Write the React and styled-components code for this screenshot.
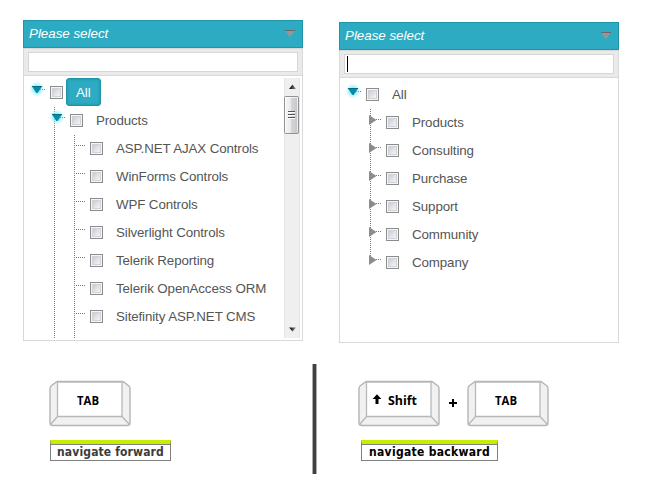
import React from "react";
import styled, { createGlobalStyle, css } from "styled-components";

const GlobalStyle = createGlobalStyle`
  * { box-sizing: border-box; }
  body {
    margin: 0;
    background: #fff;
    font-family: "Liberation Sans", Arial, sans-serif;
  }
`;

const Page = styled.main`
  width: 651px;
  height: 498px;
  overflow: hidden;
  background: #fff;
`;

const Panels = styled.section`
  display: flex;
  align-items: flex-start;
  gap: 36px;
  height: 364px;
  padding: 20px 0 0 23px;
`;

const Panel = styled.div`
  width: 280px;
  margin-top: ${(p) => p.$drop || 0}px;
`;

const Header = styled.div`
  display: flex;
  align-items: center;
  justify-content: space-between;
  height: 28px;
  padding: 0 6px 0 5px;
  border: 1px solid #1f94ab;
  background: #2dabc2;
  color: #fff;
  font-size: 13.33px;
  font-style: italic;
  line-height: 26px;
`;

const HeaderArrow = styled.svg`
  display: block;
  width: 12px;
  height: 8px;
  margin-bottom: 2px;
`;

const Filter = styled.div`
  height: 28px;
  padding: 3px 4px 2px;
  border: 1px solid #d9d9d9;
  background: #eaeaea;
`;

const FilterField = styled.div`
  display: flex;
  align-items: center;
  height: 20px;
  padding-left: 2px;
  border: 1px solid #d6d6d6;
  background: #fff;
`;

const Caret = styled.span`
  width: 1px;
  height: 16px;
  background: #000;
`;

const Body = styled.div`
  display: flex;
  justify-content: space-between;
  height: 265px;
  padding: 2px 2px 2px 6px;
  border: 1px solid #d9d9d9;
  border-top: 0;
`;

const Tree = styled.div`
  flex: 1;
  overflow: hidden;
`;

const Row = styled.div`
  display: flex;
  height: ${(p) => (p.$stub ? 8 : 28)}px;
`;

const guide = css`
  background-image: repeating-linear-gradient(to bottom, transparent 0 1px, #7c7c7c 1px 2px);
  background-position: 4px 0;
  background-repeat: no-repeat;
  background-size: 1px ${(p) => (p.$end ? "9px" : "100%")};
`;

const Indent = styled.span`
  width: 20px;
  flex: none;
  ${(p) => p.$line && guide}
`;

const NodeSvg = styled.svg`
  display: block;
  width: 20px;
  height: 28px;
`;

const CheckSvg = styled.svg`
  display: block;
  flex: none;
  width: 13px;
  height: 13px;
  margin: 8px 3px 0 0;
`;

const Label = styled.span`
  min-width: 35px;
  height: 28px;
  padding: 0 9px;
  border: 1px solid ${(p) => (p.$selected ? "#1f94ab" : "transparent")};
  border-radius: 3px;
  background: ${(p) => (p.$selected ? "#2dabc2" : "transparent")};
  box-shadow: ${(p) => (p.$selected ? "inset 0 0 3px #168ba2" : "none")};
  color: ${(p) => (p.$selected ? "#fff" : "#555")};
  font-size: 13.33px;
  letter-spacing: -0.11px;
  line-height: 27px;
  white-space: nowrap;
`;

const Scrollbar = styled.svg`
  display: block;
  flex: none;
  width: 16px;
  height: 260px;
`;

const Legend = styled.section`
  display: flex;
  align-items: flex-start;
`;

const Shortcut = styled.div`
  width: ${(p) => p.$width}px;
  padding: 16px 0 0 ${(p) => p.$inset}px;
`;

const Keys = styled.div`
  display: flex;
  height: 60px;
`;

const KeySvg = styled.svg`
  display: block;
  width: 82px;
  height: 48px;
`;

const KeyText = styled.text`
  font-family: "Open Sans", "Noto Sans", sans-serif;
  font-size: 13px;
  font-weight: 700;
  fill: #000;
`;

const Plus = styled.svg`
  display: block;
  width: 27px;
  height: 48px;
`;

const Caption = styled.div`
  width: ${(p) => p.$width}px;
  height: 21px;
  margin-left: ${(p) => p.$shift}px;
  padding: 1px 0 0 ${(p) => p.$pad}px;
  border: 1px solid #808080;
  border-top: 4px solid #c4f000;
  color: ${(p) => p.$color};
  font-family: "DejaVu Sans Condensed", "DejaVu Sans", sans-serif;
  font-stretch: condensed;
  font-size: 12px;
  font-weight: 700;
  letter-spacing: ${(p) => p.$track}px;
  line-height: 15px;
  white-space: nowrap;
  box-shadow: inset 0 1px #808080;
`;

const Divider = styled.div`
  width: 5px;
  height: 110px;
  border: solid #aaa;
  border-width: 0 1px;
  background: #404040;
`;

function Node({ kind }) {
  return (
    <NodeSvg viewBox="0 0 20 28">
      <path d={`M${kind === "leaf" ? 6 : 10} 11.5H15`} stroke="#777" strokeDasharray="1 1" />
      {kind === "open" && (
        <>
          <defs>
            <radialGradient id="glow">
              <stop offset="0.35" stopColor="#66e4f7" stopOpacity="0.75" />
              <stop offset="1" stopColor="#a5f3ff" stopOpacity="0" />
            </radialGradient>
          </defs>
          <circle cx="7" cy="11" r="8" fill="url(#glow)" />
          <path d="M1.7 8H12.3L7.6 15H6.4Z" fill="#078ba7" />
          <path d="M2 8.5H12" stroke="#066c83" />
        </>
      )}
      {kind === "closed" && <path d="M3 7L10.5 12L3 17Z" fill="#8c8c8c" />}
    </NodeSvg>
  );
}

function Checkbox() {
  return (
    <CheckSvg viewBox="0 0 13 13">
      <defs>
        <linearGradient id="check" x2="1" y2="1">
          <stop stopColor="#c6ccd6" />
          <stop offset="1" stopColor="#f8f8f8" />
        </linearGradient>
      </defs>
      <rect x=".5" y=".5" width="12" height="12" fill="#f6f6f6" stroke="#8c8c8c" />
      <rect x="2.5" y="2.5" width="8" height="8" fill="url(#check)" stroke="#cfd2d6" />
    </CheckSvg>
  );
}

function TreeRow({ level = 0, kind, selected, last, children }) {
  return (
    <Row>
      {Array.from({ length: level }, (_, i) => (
        <Indent key={i} $line={i > 0} />
      ))}
      <Indent $line={level > 0} $end={last}>
        <Node kind={kind} />
      </Indent>
      <Checkbox />
      <Label $selected={selected}>{children}</Label>
    </Row>
  );
}

function DropDown({ drop, focused, children, scroll }) {
  return (
    <Panel $drop={drop}>
      <Header>
        Please select
        <HeaderArrow viewBox="0 0 12 8">
          <path d="M0.8 1H11.2L6.6 7.5H5.4Z" fill="#969696" />
          <path d="M1 1.5H11" stroke="#686868" />
        </HeaderArrow>
      </Header>
      <Filter>
        <FilterField>{focused && <Caret />}</FilterField>
      </Filter>
      <Body>
        <Tree>{children}</Tree>
        {scroll && <TreeScrollbar />}
      </Body>
    </Panel>
  );
}

function TreeScrollbar() {
  return (
    <Scrollbar viewBox="0 0 16 260">
      <defs>
        <linearGradient id="thumb">
          <stop stopColor="#f7f7f7" />
          <stop offset="0.45" stopColor="#e9e9eb" />
          <stop offset="0.5" stopColor="#d5d5d8" />
          <stop offset="1" stopColor="#c4c4c8" />
        </linearGradient>
        <linearGradient id="tip">
          <stop offset="0.3" stopColor="#222" />
          <stop offset="1" stopColor="#999" />
        </linearGradient>
      </defs>
      <rect width="16" height="260" fill="#efefef" />
      <path d="M.5 0V260M15.5 0V260" stroke="#e4e4e4" />
      <path d="M8.5 6.5L12 11H5Z" fill="url(#tip)" />
      <rect x=".5" y="18.5" width="14" height="37" rx="1" fill="url(#thumb)" stroke="#929292" />
      <path d="M1.5 54V19.5H13.5V54" fill="none" stroke="#fff" opacity=".7" />
      <path d="M4 33.5H11M4 36.5H11M4 39.5H11" stroke="#fff" transform="translate(0 1)" />
      <path d="M4 33.5H11M4 36.5H11M4 39.5H11" stroke="#555" />
      <path d="M5 249.5H12L8.5 253.5Z" fill="url(#tip)" />
    </Scrollbar>
  );
}

function Key({ label, x, width, arrow }) {
  return (
    <KeySvg viewBox="0 0 82 48">
      <path
        d="M8 1.5H74L80 6Q81 7 81 9V43Q81 45.5 78 45.5H4Q1 45.5 1 43V9Q1 7 2 6Z"
        fill="#f1f1f1"
        stroke="#b5b5b5"
        strokeWidth="1.4"
      />
      <path
        d="M8.5 2H73V36.5H8.5ZM8.5 36.5L2 44M73 36.5L80 44"
        fill="#fff"
        stroke="#b8b8b8"
        strokeWidth="1.3"
      />
      {arrow && <path d="M19 14.3L23.4 19H20.5V24H17.5V19H14.6Z" fill="#000" />}
      <KeyText x={x} y="25" textLength={width} lengthAdjust="spacingAndGlyphs">
        {label}
      </KeyText>
    </KeySvg>
  );
}

const products = [
  "ASP.NET AJAX Controls",
  "WinForms Controls",
  "WPF Controls",
  "Silverlight Controls",
  "Telerik Reporting",
  "Telerik OpenAccess ORM",
  "Sitefinity ASP.NET CMS",
];

const sections = ["Products", "Consulting", "Purchase", "Support", "Community", "Company"];

export default function App() {
  return (
    <Page>
      <GlobalStyle />
      <Panels>
        <DropDown scroll>
          <TreeRow kind="open" selected>All</TreeRow>
          <TreeRow level={1} kind="open">Products</TreeRow>
          {products.map((name) => (
            <TreeRow key={name} level={2} kind="leaf">{name}</TreeRow>
          ))}
          <Row $stub>
            <Indent />
            <Indent $line />
            <Indent $line />
          </Row>
        </DropDown>
        <DropDown drop={2} focused>
          <TreeRow kind="open">All</TreeRow>
          {sections.map((name, i) => (
            <TreeRow key={name} level={1} kind="closed" last={i === sections.length - 1}>
              {name}
            </TreeRow>
          ))}
        </DropDown>
      </Panels>
      <Legend>
        <Shortcut $width={312} $inset={49}>
          <Keys>
            <Key label="TAB" x={28} width={22} />
          </Keys>
          <Caption $width={121} $shift={1} $pad={6} $color="#3c3c3c" $track={0.14}>
            navigate forward
          </Caption>
        </Shortcut>
        <Divider />
        <Shortcut $width={334} $inset={41}>
          <Keys>
            <Key label="Shift" x={30} width={29} arrow />
            <Plus viewBox="0 0 27 48">
              <path d="M9 23H17M13 19V27" stroke="#000" strokeWidth="2" />
            </Plus>
            <Key label="TAB" x={28} width={22} />
          </Keys>
          <Caption $width={137} $shift={3} $pad={7} $color="#000" $track={0.3}>
            navigate backward
          </Caption>
        </Shortcut>
      </Legend>
    </Page>
  );
}
